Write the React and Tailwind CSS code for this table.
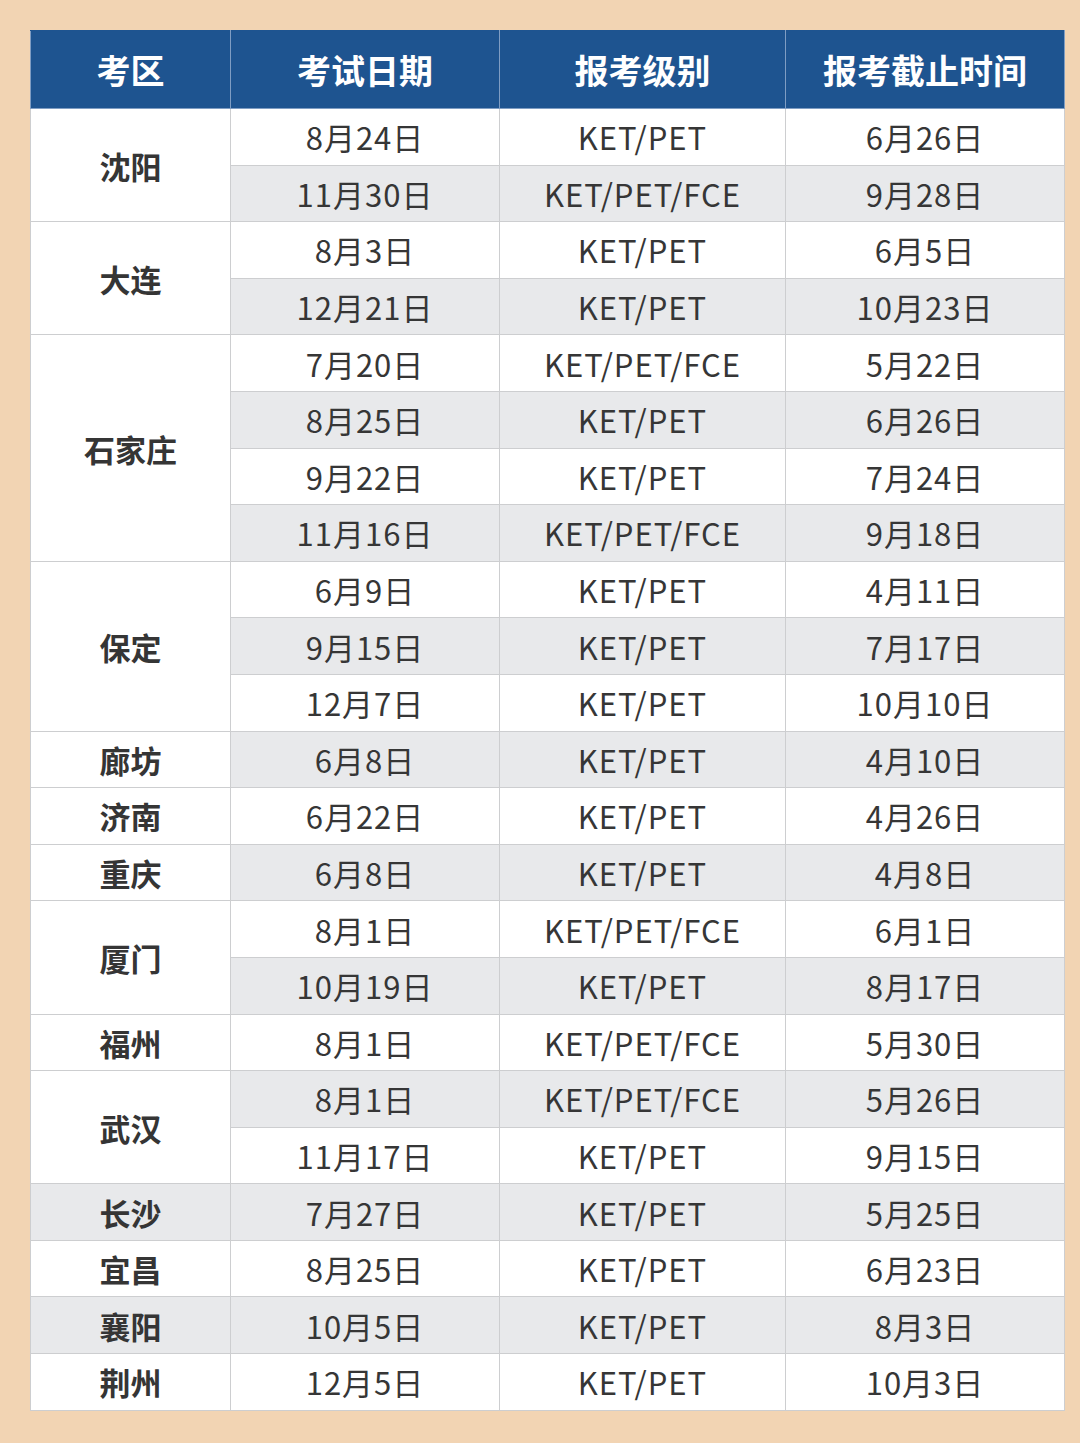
import React from "react";

const groups = [
  { city: "沈阳", rows: [["8月24日", "KET/PET", "6月26日"], ["11月30日", "KET/PET/FCE", "9月28日"]] },
  { city: "大连", rows: [["8月3日", "KET/PET", "6月5日"], ["12月21日", "KET/PET", "10月23日"]] },
  { city: "石家庄", rows: [["7月20日", "KET/PET/FCE", "5月22日"], ["8月25日", "KET/PET", "6月26日"], ["9月22日", "KET/PET", "7月24日"], ["11月16日", "KET/PET/FCE", "9月18日"]] },
  { city: "保定", rows: [["6月9日", "KET/PET", "4月11日"], ["9月15日", "KET/PET", "7月17日"], ["12月7日", "KET/PET", "10月10日"]] },
  { city: "廊坊", rows: [["6月8日", "KET/PET", "4月10日"]] },
  { city: "济南", rows: [["6月22日", "KET/PET", "4月26日"]] },
  { city: "重庆", rows: [["6月8日", "KET/PET", "4月8日"]] },
  { city: "厦门", rows: [["8月1日", "KET/PET/FCE", "6月1日"], ["10月19日", "KET/PET", "8月17日"]] },
  { city: "福州", rows: [["8月1日", "KET/PET/FCE", "5月30日"]] },
  { city: "武汉", rows: [["8月1日", "KET/PET/FCE", "5月26日"], ["11月17日", "KET/PET", "9月15日"]] },
  { city: "长沙", grey: true, rows: [["7月27日", "KET/PET", "5月25日"]] },
  { city: "宜昌", rows: [["8月25日", "KET/PET", "6月23日"]] },
  { city: "襄阳", grey: true, rows: [["10月5日", "KET/PET", "8月3日"]] },
  { city: "荆州", rows: [["12月5日", "KET/PET", "10月3日"]] },
];

export default function App() {
  let idx = 0;
  const trs = [];
  groups.forEach((g, gi) => {
    g.rows.forEach((r, ri) => {
      const grey = idx % 2 === 1;
      const bg = grey ? "bg-[#e8e9eb]" : "bg-white";
      trs.push(
        <tr key={`${gi}-${ri}`} className="h-[56.6px]">
          {ri === 0 && (
            <td
              rowSpan={g.rows.length}
              className={`${g.grey ? "bg-[#e8e9eb]" : "bg-white"} border border-[#cdced0] text-center align-middle font-bold text-[31px] text-[#353535]`}
            >
              {g.city}
            </td>
          )}
          {r.map((c, ci) => (
            <td
              key={ci}
              className={`${bg} border border-[#cdced0] text-center align-middle text-[31px] text-[#363636] tracking-[1px]`}
            >
              {c}
            </td>
          ))}
        </tr>
      );
      idx++;
    });
  });

  return (
    <div
      className="w-[1080px] h-[1443px] bg-[#f2d4b3] pt-[30px] pl-[30px]"
      style={{ fontFamily: '"Noto Sans CJK SC", "Noto Sans", sans-serif' }}
    >
      <table className="w-[1034px] border-collapse table-fixed leading-none">
        <colgroup>
          <col className="w-[200px]" />
          <col className="w-[269px]" />
          <col className="w-[286px]" />
          <col className="w-[279px]" />
        </colgroup>
        <thead>
          <tr className="h-[78px] bg-[#1e5490]">
            {["考区", "考试日期", "报考级别", "报考截止时间"].map((h, i) => (
              <th
                key={i}
                className="border border-[#7f9dc3] border-t-[#1e5490] text-center align-middle font-bold text-[34px] text-white"
              >
                {h}
              </th>
            ))}
          </tr>
        </thead>
        <tbody>{trs}</tbody>
      </table>
    </div>
  );
}
